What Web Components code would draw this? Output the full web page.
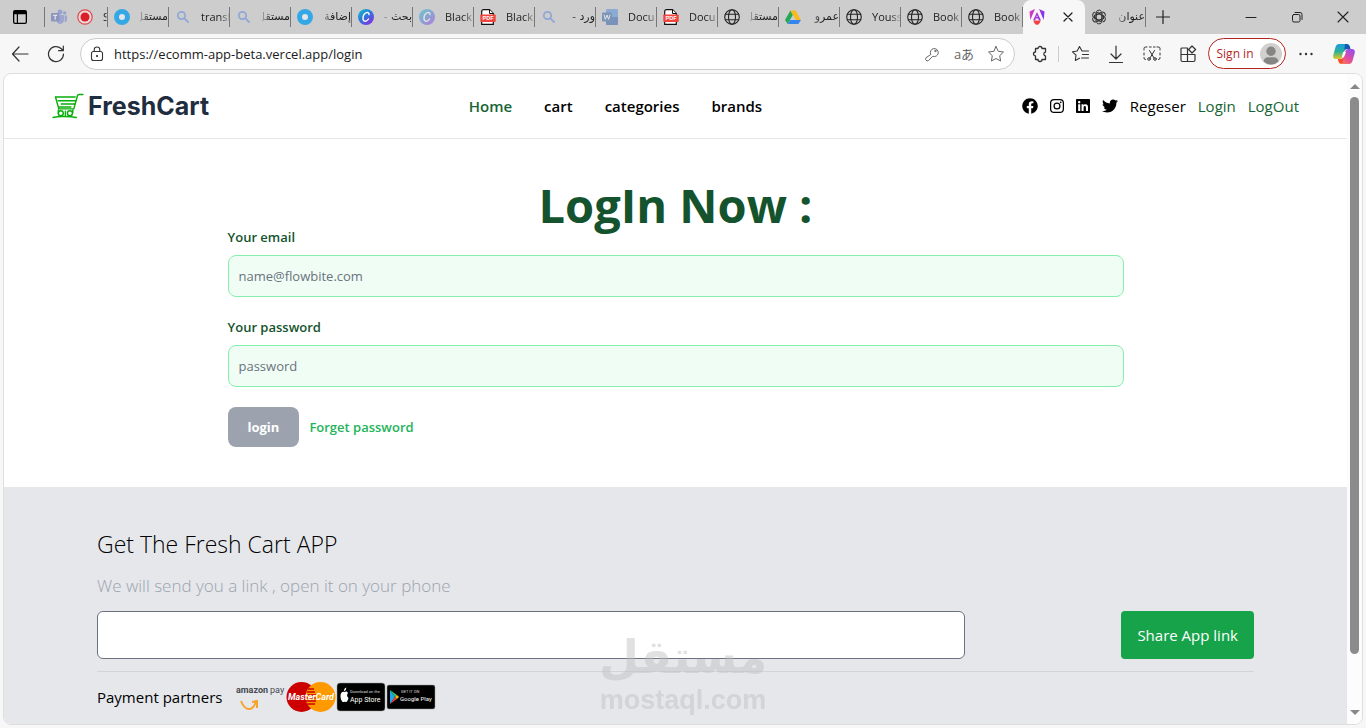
<!DOCTYPE html>
<html lang="en">
<head>
<meta charset="utf-8">
<meta name="viewport" content="width=device-width, initial-scale=1">
<title>FreshCart - Login</title>
<style>
html,body{height:100%}
body{margin:0;background:#f7f7f7;color:#000;font-family:"Open Sans","Noto Sans","DejaVu Sans",sans-serif;font-size:15px;line-height:24px;overflow:hidden}
</style>
</head>
<body>
<browser-window>
  <tab-strip slot="tabs">
    <browser-tab icon="teams" second="record" dim>S</browser-tab>
    <browser-tab icon="ring" dir="rtl">مستقل</browser-tab>
    <browser-tab icon="search" dim>transl</browser-tab>
    <browser-tab icon="search" dir="rtl" dim>مستقل</browser-tab>
    <browser-tab icon="ring" dir="rtl">إضافة</browser-tab>
    <browser-tab icon="canva" dir="rtl">بحث -</browser-tab>
    <browser-tab icon="canva" dim>Black</browser-tab>
    <browser-tab icon="pdf">Black</browser-tab>
    <browser-tab icon="search" dir="rtl" dim>ورد -</browser-tab>
    <browser-tab icon="word" dim>Docu</browser-tab>
    <browser-tab icon="pdf">Docu</browser-tab>
    <browser-tab icon="globe" dir="rtl">مستقل</browser-tab>
    <browser-tab icon="drive" dir="rtl">عمرو</browser-tab>
    <browser-tab icon="globe">Youss</browser-tab>
    <browser-tab icon="globe">Book</browser-tab>
    <browser-tab icon="globe">Book</browser-tab>
    <browser-tab icon="angular" active></browser-tab>
    <browser-tab icon="openai" dir="rtl">عنوان</browser-tab>
  </tab-strip>
  <browser-toolbar slot="toolbar"></browser-toolbar>
  <page-frame>
    <site-header></site-header>
    <login-form></login-form>
    <site-footer></site-footer>
  </page-frame>
</browser-window>
<water-mark></water-mark>
<script>
const line = (vb, body, w = 1.2) => `<svg viewBox="0 0 ${vb} ${vb}" fill="none" stroke="currentColor" stroke-width="${w}" stroke-linecap="round" stroke-linejoin="round">${body}</svg>`;
const solid = (vb, body) => `<svg viewBox="${vb}" fill="currentColor">${body}</svg>`;
const label = (x, y, size, fill, text, extra = '') => `<text x="${x}" y="${y}" font-family="Roboto, sans-serif" font-size="${size}" fill="${fill}" ${extra}>${text}</text>`;
const ICONS = {
  workspace: solid('0 0 16 16', '<path fill-rule="evenodd" d="M3 1h10a2 2 0 0 1 2 2v10a2 2 0 0 1-2 2H3a2 2 0 0 1-2-2V3a2 2 0 0 1 2-2zm-.7 4.3V13c0 .5.3.8.8.8h1.7V5.300zm3.700 0v8.500h7c.4 0 .7-.3.7-.8V5.300z"/>'),
  teams: '<svg viewBox="0 0 16 16"><circle cx="9" cy="3" r="2.500" fill="#5b6fd0"/><circle cx="13.700" cy="4" r="1.700" fill="#5b6fd0"/><path fill="#6678d2" d="M6 6h7v5.500a4 4 0 0 1-7 2zM13.600 6.500H16v4.200c0 1.500-1 2.300-2.400 2.300z"/><rect y="4" width="8.500" height="8.500" rx="1" fill="#4053ae"/><path d="M2.200 6.300h4M4.200 6.300v4.500" stroke="#fff" stroke-width="1.200"/></svg>',
  record: '<svg viewBox="0 0 16 16"><circle cx="8" cy="8" r="7.200" fill="#eadada" stroke="#e5484d" stroke-width="1.200"/><circle cx="8" cy="8" r="4.500" fill="#dc1f26"/></svg>',
  ring: '<svg viewBox="0 0 16 16"><circle cx="8" cy="8" r="5.500" fill="#e2e6e8" stroke="#34a8e6" stroke-width="5"/></svg>',
  search: '<svg viewBox="0 0 16 16" fill="none" stroke="#4a7be0" stroke-width="1.800" stroke-linecap="round"><circle cx="6.500" cy="6.500" r="3.700"/><path d="m9.400 9.400 3.600 3.600"/></svg>',
  canva: '<svg viewBox="0 0 16 16"><defs><linearGradient id="g" x1="0" y1="0" x2=".8" y2="1"><stop offset="0" stop-color="#0cc5cd"/><stop offset=".5" stop-color="#2f78d8"/><stop offset="1" stop-color="#8a2be8"/></linearGradient></defs><circle cx="8" cy="8" r="8" fill="url(#g)"/><path d="M11 5.600c.2-1.700-1.100-2.500-2.500-1.900C6.400 4.500 4.900 7.200 5 9.600c.1 2 1.300 3.100 2.900 2.600 1.200-.4 2-1.200 2.600-2.200" fill="none" stroke="#fff" stroke-width="1.400" stroke-linecap="round"/></svg>',
  pdf: '<svg viewBox="0 0 16 16"><path d="M3.500.700h6L13.300 4.500v10.800H1.700V2.200C1.700 1.300 2.400.7 3.500.7z" fill="#fff" stroke="#111" stroke-width="1.200"/><path d="M9.500.700v3.800h3.800" fill="#fff" stroke="#111"/><rect x=".3" y="5.500" width="15.400" height="7.500" rx=".8" fill="#f0443e"/><text x="8" y="11.200" text-anchor="middle" font-family="Liberation Sans" font-weight="bold" font-size="5.500" fill="#fff">PDF</text></svg>',
  word: '<svg viewBox="0 0 16 16"><rect x="4" y="0" width="12" height="16" rx="1" fill="#3f83dc"/><path d="M4 8h12v7a1 1 0 0 1-1 1H5a1 1 0 0 1-1-1z" fill="#174ca5"/><rect y="3.500" width="10" height="9" rx="1" fill="#17539f"/><path d="m2 5.700 1.400 4.600L5 6l1.600 4.300L8 5.700" fill="none" stroke="#fff"/></svg>',
  globe: line(16, '<circle cx="8" cy="8" r="7.300"/><ellipse cx="8" cy="8" rx="3.500" ry="7.300"/><path d="M1.400 5.300h13.200M1.400 10.700h13.200"/>', 1.1),
  drive: '<svg viewBox="0 0 16 16"><path fill="#28a855" d="M5.400 1.500 0 11l2.700 4 5.300-9z"/><path fill="#fbb91b" d="M5.400 1.500h5.200L16 11h-5.300z"/><path fill="#3486ee" d="M5.200 11H16l-2.700 4H2.700z"/><path d="m8 6-2.800 5h5.500z" fill="#cdcdcd"/></svg>',
  angular: '<svg viewBox="0 0 16 16"><defs><linearGradient id="a" x1="0" y1="0" x2="1" y2=".3"><stop offset="0" stop-color="#e23fae"/><stop offset="1" stop-color="#8330ee"/></linearGradient></defs><path fill="url(#a)" d="M10 0 15.500 2.600 14.700 11zM6 0 .500 2.600 1.300 11zM8 3l4 8.400H9.900L9.200 9.600H6.800l-.7 1.800H4zm0 3.200L7.300 8.100h1.400z"/><path fill="#f44343" d="m4.500 12.500 1-1h5l1 1-1.500 2.600L8 16l-2-.9z"/></svg>',
  openai: `<svg viewBox="0 0 16 16" fill="none" stroke="#333" stroke-width="1">${[0,60,120,180,240,300].map(a=>`<path transform="rotate(${a} 8 8)" d="M5 9.700V4.200a3 3 0 0 1 5.300-2M5 6.300l4.500-2.600 2.600 1.500"/>`).join('')}</svg>`,
  close: line(16, '<path d="m4 4 8 8m0-8-8 8"/>', 1.3),
  plus: line(16, '<path d="M8 1.500v13M1.500 8h13"/>', 1.2),
  minimize: line(16, '<path d="M3 8.500h10"/>', 1),
  restore: line(16, '<rect x="3.500" y="5.500" width="7.500" height="7.500" rx="1.500"/><path d="M6 3.500h5a2 2 0 0 1 2 2v5"/>', 1),
  closeWin: line(16, '<path d="m3 3 10 10m0-10L3 13"/>', 1.1),
  back: line(18, '<path d="M17 9H2M8 2 1.500 9 8 16"/>', 1.2),
  reload: line(18, '<path d="M16.500 9A7.500 7.500 0 1 1 14 3.500l2 2M16.300 1v4.700h-4.700"/>', 1.2),
  lock: line(16, '<rect x="2.500" y="5.500" width="11" height="9" rx="2"/><path d="M5.200 5.300V3.800a2.800 2.800 0 0 1 5.600 0v1.500"/><circle cx="8" cy="10" r=".5" fill="currentColor"/>', 1.1),
  key: line(16, '<path d="M6.600 8.200a4 4 0 1 1 2.200 2.100L4.500 14.500l-1.500.5-1.500-1.500.5-1.500z"/><circle cx="11.300" cy="5" r=".7"/>', 1),
  star: line(18, '<path d="m9 1.500 2.300 4.800 5.200.7-3.800 3.700.9 5.300L9 13.500 4.400 16l.9-5.300L1.500 7l5.200-.7z"/>', 1),
  puzzle: line(18, '<path d="M4.500 3.500H7a2 2 0 0 1 4 0h3.500v3.700h-.4a1.900 1.900 0 0 0 0 3.600h.4v3.700H11a2 2 0 0 1-4 0H4.500V11a2 2 0 0 1 0-4V3.500z"/>', 1.3),
  favs: line(18, '<path d="M12.500 6H11L8.500 1.500 6.200 6 1.500 6.800 5 10.200l-.7 5.300 4.200-2.300M12.500 6h5M11.500 9.500h6M10.500 13h7"/>', 1.1),
  download: line(18, '<path d="M9 1v12.500M4 9l5 5 5-5M2.500 17.500h13"/>', 1.2),
  snip: line(18, '<path d="M4 2H2.500A1.500 1.500 0 0 0 1 3.500V5M6.500 2h1.700M10.500 2h1.600M14 2h1.500A1.500 1.500 0 0 1 17 3.500V5M1 8v2M17 8v2M1 12.500v.5A1.500 1.500 0 0 0 2.500 14.500M17 12.500v.5a1.500 1.500 0 0 1-1.500 1.500M6.500 5.500l4.500 7.500M11.500 5.500 7 13"/><circle cx="6" cy="14" r="1.300"/><circle cx="12" cy="14" r="1.300"/>', 1),
  apps: line(18, '<path d="M8.500 3H3a1 1 0 0 0-1 1v11a1.500 1.500 0 0 0 1.500 1.500h11A1.500 1.500 0 0 0 16 15V9.500H2M8.500 3v13.500"/><path d="m13 1 3.600 3.500L13 8 9.600 4.500z"/>', 1.2),
  dots: solid('0 0 18 18', '<circle cx="3.500" cy="9" r="1.200"/><circle cx="9" cy="9" r="1.200"/><circle cx="14.500" cy="9" r="1.200"/>'),
  avatar: '<svg viewBox="0 0 22 22"><circle cx="11" cy="11" r="11" fill="#d2d0ce"/><circle cx="11" cy="8.300" r="4.700" fill="#858585"/><path d="M3.500 18.500C4 15.500 6 14.300 8 14.300h6c2 0 4 1.200 4.500 4.200a11 11 0 0 1-15 0z" fill="#858585"/></svg>',
  copilot: '<svg viewBox="0 0 22 20"><defs><linearGradient id="c1" x1="0" y1="0" x2="0" y2="1"><stop offset="0" stop-color="#1b9de0"/><stop offset=".5" stop-color="#2ab19a"/><stop offset="1" stop-color="#e6c820"/></linearGradient><linearGradient id="c2" x1=".7" y1="0" x2="0" y2="1"><stop offset="0" stop-color="#9a50e8"/><stop offset=".5" stop-color="#e54c9a"/><stop offset="1" stop-color="#ff8a3a"/></linearGradient></defs><path fill="url(#c1)" d="M6 0h7c2 0 3 1 3.500 3l.500 2h-3c-1.500 0-2.300.8-2.700 2.200L10 11.500C9.400 14 8.500 15 6.500 15H3c-2.500 0-3.300-2-2.600-4.500l2-7C3 1.300 4 0 6 0z"/><path fill="#1459b5" d="M12 0h1.500c2 0 3 1 3.500 3l.5 2h-3.500c-1.500 0-2.300.8-2.700 2.200z"/><path fill="url(#c2)" d="M16 20H9c-2 0-3-1-3.500-3L5 15h3c1.500 0 2.300-.8 2.700-2.200L12 8.500C12.600 6 13.500 5 15.500 5H19c2.500 0 3.300 2 2.600 4.500l-2 7C19 18.700 18 20 16 20z"/><path fill="#fff" d="m10 8 3 0-2 5-2 0z"/><path fill="#f24f2e" d="M5 15h3c1.500 0 2.300-.8 2.700-2.200L9.500 19C7 20.500 6 19 5.500 17z"/></svg>',
  facebook: solid('0 0 512 512', '<path d="M504 256C504 119 393 8 256 8S8 119 8 256c0 123.780 90.690 226.380 209.250 245V327.690h-63V256h63v-54.640c0-62.150 37-96.480 93.670-96.480 27.140 0 55.520 4.840 55.520 4.840v61h-31.280c-30.800 0-40.410 19.120-40.410 38.730V256h68.780l-11 71.690h-57.780V501C413.310 482.380 504 379.780 504 256z"/>'),
  instagram: '<svg viewBox="0 0 448 448" fill="none" stroke="currentColor" stroke-width="40"><rect x="20" y="20" width="408" height="408" rx="110"/><circle cx="224" cy="224" r="94"/><circle cx="343" cy="105" r="27" fill="currentColor" stroke="none"/></svg>',
  linkedin: solid('0 32 448 448', '<path d="M416 32H31.900C14.300 32 0 46.500 0 64.300v383.400C0 465.500 14.300 480 31.900 480H416c17.600 0 32-14.500 32-32.300V64.300c0-17.800-14.400-32.300-32-32.300zM135.400 416H69V202.200h66.500V416zm-33.200-243c-21.300 0-38.500-17.300-38.500-38.500S80.900 96 102.200 96c21.200 0 38.500 17.300 38.500 38.500 0 21.300-17.200 38.500-38.500 38.500zm282.100 243h-66.400V312c0-24.800-.5-56.700-34.500-56.700-34.600 0-39.900 27-39.900 54.900V416h-66.400V202.200h63.700v29.200h.9c8.900-16.800 30.600-34.500 62.900-34.500 67.200 0 79.700 44.300 79.700 101.900V416z"/>'),
  twitter: solid('0 0 512 512', '<path d="M459.370 151.716c.325 4.548.325 9.097.325 13.645 0 138.720-105.583 298.558-298.558 298.558-59.452 0-114.680-17.219-161.137-47.106 8.447.974 16.568 1.299 25.340 1.299 49.055 0 94.213-16.568 130.274-44.832-46.132-.975-84.792-31.188-98.112-72.772 6.498.974 12.995 1.624 19.818 1.624 9.421 0 18.843-1.300 27.614-3.573-48.081-9.747-84.143-51.980-84.143-102.985v-1.299c13.969 7.797 30.214 12.670 47.431 13.319-28.264-18.843-46.781-51.005-46.781-87.391 0-19.492 5.197-37.360 14.294-52.954 51.655 63.675 129.300 105.258 216.365 109.807-1.624-7.797-2.599-15.918-2.599-24.040 0-57.828 46.782-104.934 104.934-104.934 30.213 0 57.502 12.670 76.670 33.137 23.715-4.548 46.456-13.320 66.599-25.340-7.798 24.366-24.366 44.833-46.132 57.827 21.117-2.273 41.584-8.122 60.426-16.243-14.292 20.791-32.161 39.308-52.628 54.253z"/>'),
  cart: '<svg viewBox="0 0 33 27" fill="none" stroke="#0aad0a" stroke-width="1.500" stroke-linecap="round" stroke-linejoin="round"><path d="M32 1.500h-4c-1 0-1.500.5-1.700 1.400L22.500 16.500H7L3.500 4.200H24M6.500 8h18M9.500 11.500h14M7.500 14.500h12"/><circle cx="9" cy="21" r="2.600"/><circle cx="18.500" cy="21" r="2.600"/><path d="M6.500 17.500v3M21.500 17.500v3M13.800 19v4M1 25.500c5-1.300 7-1 12-1s7 0 12 1"/></svg>',
  amazon: `<svg viewBox="0 0 50 32">${label(0, 12, 9, '#454a50', 'amazon', 'font-weight="bold"')}${label(34, 12, 9, '#454a50', 'pay')}<path d="M5 20c4 10 11 11 15 1M16 21l5-1v7" fill="none" stroke="#f5a32c" stroke-width="2"/></svg>`,
  mastercard: `<svg viewBox="0 0 50 32"><circle cx="15.500" cy="16" r="15" fill="#c00"/><circle cx="34.500" cy="16" r="15" fill="#f90"/><path d="M22 8h6M21 11h8M20 14h10M20 17h10M20 20h10M21 23h8" stroke="#c00" stroke-width="1.500"/>${label(25, 19, 9, '#fff', 'MasterCard', 'text-anchor="middle" font-style="italic" font-weight="bold"')}</svg>`,
  appstore: `<svg viewBox="0 0 50 32"><rect x="1" y="2" width="48" height="28" rx="3" fill="#000" stroke="#999" stroke-width=".5"/><path fill="#fff" d="M8.500 11c1.500-1 3-.5 3.500 1-1.500 1.500-1 4 .500 5-.5 2-1.500 4.500-3 4-.800-.3-1-.3-1.800 0C6 21.500 4.500 18 4.500 15c0-3.500 2-4.700 4-4zM8 10c0-1.800.8-3 2.200-3.500C10.300 8.500 9.500 9.800 8 10z"/>${label(14, 12, 4, '#ddd', 'Download on the')}${label(14, 21, 7, '#fff', 'App Store')}</svg>`,
  gplay: `<svg viewBox="0 0 50 32"><rect x="1" y="4" width="48" height="24" rx="2" fill="#000" stroke="#999" stroke-width=".5"/><path d="M4 9v14l5-7z" fill="#21a5e8"/><path d="m4 9 7 5-2 2z" fill="#2fc46c"/><path d="m4 23 7-5-2-2z" fill="#ea4335"/><path d="m11 14 2 2-2 2-2-2z" fill="#fbbc04"/>${label(15, 12, 4, '#ddd', 'GET IT ON')}${label(14, 20, 6, '#fff', 'Google Play')}</svg>`
};

class Base extends HTMLElement {
  connectedCallback() {
    if (this.shadowRoot) return;
    this.attachShadow({ mode: 'open' }).innerHTML = this.view();
  }
}
const RESET = `*{box-sizing:border-box}button,input{font:inherit;color:inherit;margin:0;padding:0;border:0;background:none;outline:0}a{text-decoration:none;color:inherit}h1,h2,p{margin:0}`;

customElements.define('ui-icon', class extends Base {
  view() {
    const w = this.getAttribute('w') || 16, h = this.getAttribute('h') || w;
    return `<style>:host{display:block;flex:none;width:${w}px;height:${h}px}svg{display:block;width:100%;height:100%}</style>${ICONS[this.getAttribute('name')]}`;
  }
});

customElements.define('browser-window', class extends Base {
  view() {
    return `<style>:host{display:flex;flex-direction:column;height:100vh;box-sizing:border-box;padding-bottom:3px}
    ::slotted(page-frame){flex:1;min-height:0}</style><slot name="tabs"></slot><slot name="toolbar"></slot><slot></slot>`;
  }
});

customElements.define('tab-strip', class extends Base {
  view() {
    return `<style>${RESET}:host{display:flex;height:34px;background:#cdcdcd;color:#222}
    .lead{width:44px;flex:none;display:flex;align-items:center;padding-left:12px;color:#000}
    .tabs{display:flex;min-width:0}
    button{display:flex;align-items:center;justify-content:center}
    .lead{justify-content:flex-start}
    .add{width:34px}.win{width:46px}.grow{flex:1}</style>
    <button class="lead" aria-label="Tab actions"><ui-icon name="workspace"></ui-icon></button>
    <div class="tabs"><slot></slot></div>
    <button class="add" aria-label="New tab"><ui-icon name="plus"></ui-icon></button>
    <span class="grow"></span>
    <button class="win" aria-label="Minimize"><ui-icon name="minimize"></ui-icon></button>
    <button class="win" aria-label="Restore"><ui-icon name="restore"></ui-icon></button>
    <button class="win" aria-label="Close"><ui-icon name="closeWin"></ui-icon></button>`;
  }
});

customElements.define('browser-tab', class extends Base {
  view() {
    const active = this.hasAttribute('active'), second = this.getAttribute('second'), rtl = this.getAttribute('dir') === 'rtl';
    return `<style>${RESET}
    :host{display:flex;align-items:center;direction:ltr;width:61px;min-width:0;font-size:11px;line-height:20px}
    :host([active]){background:#f7f7f7;border-radius:8px 8px 0 0;width:62px}
    :host([second]){width:64px}
    .tab{flex:1;min-width:0;height:20px;display:flex;align-items:center;gap:10px;padding-left:6px;border-right:1px solid #777}
    :host([second]) .tab{border-left:1px solid #777}
    :host([active]) .tab{border-color:transparent}
    :host([dim]) ui-icon:first-child{opacity:.45}
    .t{flex:1;min-width:0;overflow:hidden;white-space:nowrap;text-align:left;
      -webkit-mask-image:linear-gradient(to ${rtl ? 'left' : 'right'},#000 65%,transparent 110%);mask-image:linear-gradient(to ${rtl ? 'left' : 'right'},#000 65%,transparent 110%)}
    .rtl{direction:rtl;text-align:right;font-family:"DejaVu Sans",sans-serif}
    .x{margin-left:5px}</style>
    <button class="tab"><ui-icon name="${this.getAttribute('icon')}"></ui-icon>${second ? `<ui-icon name="${second}"></ui-icon>` : ''}${active ? '<ui-icon class="x" name="close"></ui-icon>' : `<span class="t${rtl ? ' rtl' : ''}"><slot></slot></span>`}</button>`;
  }
});

customElements.define('browser-toolbar', class extends Base {
  view() {
    const b = (n, l, w = 18, h = w) => `<button aria-label="${l}"><ui-icon name="${n}" w="${w}" h="${h}"></ui-icon></button>`;
    return `<style>${RESET}
    :host{display:flex;align-items:center;height:39px;padding-right:4px;padding-left:2px;color:#333;box-sizing:border-box}
    button{width:36px;height:32px;flex:none;display:flex;align-items:center;justify-content:center}
    .address{flex:1;min-width:0;display:flex;align-items:center;height:32px;margin:0 7px 0 6px;padding-right:2px;border:1px solid #ccc;border-radius:16px;background:#fff}
    .address button{width:32px;color:#666}.address .lock{color:#333}
    input{flex:1;min-width:0;font-size:13px;line-height:20px;padding-left:1px;color:#1b1b1b}
    .lang{font-size:13px;font-family:"Open Sans","Noto Sans CJK JP",sans-serif}
    .sep{width:1px;height:16px;background:#ccc;margin-right:3px}
    .signin{width:78px;height:31px;margin:0 2px;border:1px solid #b3261e;border-radius:16px;color:#b3261e;font-size:12px;gap:6px;padding-left:4px;background:#fff}</style>
    ${b('back', 'Back')}${b('reload', 'Refresh')}
    <div class="address"><button class="lock" aria-label="Site information"><ui-icon name="lock"></ui-icon></button>
      <input aria-label="Address" value="https://ecomm-app-beta.vercel.app/login">
      ${b('key', 'Passwords', 16)}<button class="lang" aria-label="Translate">aあ</button>${b('star', 'Add to favorites')}</div>
    ${b('puzzle', 'Extensions')}<span class="sep"></span>${b('favs', 'Favorites')}${b('download', 'Downloads')}${b('snip', 'Screenshot')}${b('apps', 'Apps')}
    <button class="signin">Sign in<ui-icon name="avatar" w="22"></ui-icon></button>
    ${b('dots', 'Settings')}<span style="width:2px"></span>${b('copilot', 'Copilot', 22, 20)}`;
  }
});

customElements.define('page-frame', class extends Base {
  view() {
    return `<style>:host{display:flex;margin:0 3px;border:1px solid #dedede;border-radius:8px;background:#fff;overflow:hidden}
    .page{flex:1;min-width:0;overflow:hidden;display:flex;flex-direction:column}
    ::slotted(*){flex:none}
    ::slotted(site-footer){flex:1 0 auto}
    .bar{flex:none;width:15px;background:#fcfcfc;display:flex;flex-direction:column;align-items:center;padding:10px 0 9px;box-sizing:border-box}
    .up,.down{border:5px solid transparent}.up{border-top:0;border-bottom-color:#888}.down{border-bottom:0;border-top-color:#888}
    .track{flex:1;width:9px;margin:8px 0}.thumb{height:92%;border-radius:5px;background:#8b8b8b}</style>
    <div class="page"><slot></slot></div>
    <div class="bar"><i class="up"></i><div class="track"><div class="thumb"></div></div><i class="down"></i></div>`;
  }
});

customElements.define('site-header', class extends Base {
  view() {
    return `<style>${RESET}
    :host{display:flex;align-items:center;justify-content:space-between;height:65px;padding:0 48px;border-bottom:1px solid #e5e7eb;box-sizing:border-box}
    .logo{display:flex;align-items:center;gap:4px;font:bold 25px/32px Inter,sans-serif;color:#1f2d3f}
    nav{display:flex;gap:32px;font-weight:600}
    .home,.auth{color:#166534}
    .side{display:flex;align-items:center;gap:12px}</style>
    <a class="logo" href="#"><ui-icon name="cart" w="32" h="26"></ui-icon>FreshCart</a>
    <nav><a class="home" href="#">Home</a><a href="#">cart</a><a href="#">categories</a><a href="#">brands</a></nav>
    <div class="side">
      <a href="#" aria-label="Facebook"><ui-icon name="facebook"></ui-icon></a>
      <a href="#" aria-label="Instagram"><ui-icon name="instagram" w="14"></ui-icon></a>
      <a href="#" aria-label="LinkedIn"><ui-icon name="linkedin" w="14"></ui-icon></a>
      <a href="#" aria-label="Twitter"><ui-icon name="twitter"></ui-icon></a>
      <a href="#">Regeser</a><a class="auth" href="#">Login</a><a class="auth" href="#">LogOut</a>
    </div>`;
  }
});

customElements.define('login-form', class extends Base {
  view() {
    return `<style>${RESET}
    :host{display:block;padding:40px 24px}
    form{max-width:896px;margin:0 auto;font-size:13px;line-height:20px}
    h1{font-size:47px;line-height:44px;padding-top:4px;text-align:center;color:#14532d}
    label{display:block;margin-bottom:8px;font-weight:600;color:#14532d}
    input{display:block;width:100%;height:42px;margin-bottom:20px;padding:0 10px;border:1px solid #86efac;border-radius:8px;background:#f0fdf4}
    input::placeholder{color:#6b7280;opacity:1}
    .row{display:flex;align-items:center;gap:10px}
    button{height:40px;padding:0 20px;border-radius:8px;background:#9ca3af;color:#fff;font-weight:bold}
    .row a{color:#22b45a;font-weight:600}</style>
    <form onsubmit="return false"><h1>LogIn Now :</h1>
    <label for="email">Your email</label><input id="email" type="email" placeholder="name@flowbite.com">
    <label for="password">Your password</label><input id="password" type="password" placeholder="password">
    <div class="row"><button>login</button><a href="#">Forget password</a></div></form>`;
  }
});

customElements.define('site-footer', class extends Base {
  view() {
    return `<style>${RESET}
    :host{display:block;background:#e5e7eb;padding:41px 93px 0;box-sizing:border-box}
    h2{font-size:23px;line-height:32px;font-weight:300;margin-bottom:12px}
    p{font-size:17px;line-height:28px;font-weight:300;color:#9ca3af;margin-bottom:11px}
    .share{display:flex;justify-content:space-between;padding-bottom:12px;border-bottom:1px solid #d1d5db}
    input{width:75%;height:48px;padding:0 12px;border:1px solid #6b7280;border-radius:6px;background:#fff}
    button{height:48px;padding:0 16px;border-radius:4px;background:#16a34a;color:#fff}
    .pay{display:flex;align-items:center;gap:13px;padding-top:9px}
    .logos{display:flex}</style>
    <h2>Get The Fresh Cart APP</h2><p>We will send you a link , open it on your phone</p>
    <div class="share"><input type="email" aria-label="Email for the app link"><button>Share App link</button></div>
    <div class="pay"><span>Payment partners</span><div class="logos">${['amazon', 'mastercard', 'appstore', 'gplay'].map(n => `<ui-icon name="${n}" w="50" h="32"></ui-icon>`).join('')}</div></div>`;
  }
});

customElements.define('water-mark', class extends Base {
  view() {
    return `<style>:host{position:fixed;left:50%;bottom:14px;transform:translateX(-50%);display:flex;flex-direction:column;align-items:center;gap:2px;color:#bdbdbd;opacity:.45;pointer-events:none;white-space:nowrap}
    .ar{font:bold 46px/54px "DejaVu Sans",sans-serif}.en{font:bold 27px/28px "Liberation Sans",sans-serif}</style>
    <span class="ar" lang="ar" dir="rtl">مستقل</span><span class="en">mostaql.com</span>`;
  }
});
</script>
</body>
</html>
